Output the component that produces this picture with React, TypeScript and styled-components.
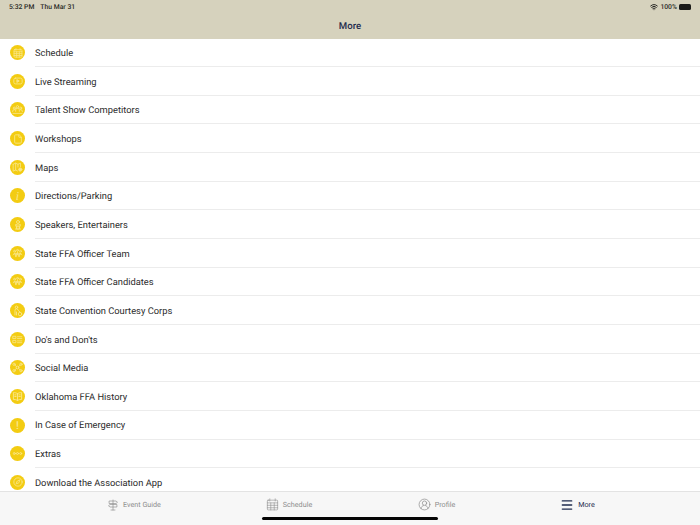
import React from 'react'
import styled, { createGlobalStyle } from 'styled-components'
import { Compass, File, Menu, Wifi } from 'lucide-react'

const GlobalStyle = createGlobalStyle`
  html, body {
    margin: 0;
    padding: 0;
    background: #fff;
    font-family: Roboto, "Liberation Sans", sans-serif;
    text-rendering: geometricPrecision;
  }
`

const Page = styled.div`
  position: relative;
  width: 700px;
  height: 525px;
  display: flex;
  flex-direction: column;
  overflow: hidden;
`

const Header = styled.header`
  height: 39px;
  flex: none;
  background: #d6d2bd;
  display: flex;
  flex-direction: column;
`

const StatusBar = styled.div`
  height: 13px;
  padding: 0 9px 0 9px;
  display: flex;
  align-items: center;
  justify-content: space-between;
  font-size: 6.8px;
  font-weight: 500;
  color: #2a2a26;
`

const StatusGroup = styled.div`
  display: flex;
  align-items: center;
  gap: 6px;
`

const StatusRight = styled(StatusGroup)`
  gap: 2px;
`

const Battery = styled.div`
  width: 12px;
  height: 6px;
  border-radius: 1.5px;
  background: #1c1c1a;
`

const Title = styled.div`
  flex: 1;
  display: flex;
  align-items: center;
  justify-content: center;
  padding-top: 1px;
  font-size: 9.6px;
  font-weight: 500;
  color: #1e2b4d;
`

const List = styled.div`
  flex: 1;
  overflow: hidden;
  margin-top: -0.7px;
`

const Row = styled.div`
  height: 28.67px;
  display: flex;
  align-items: center;
  padding-left: 10px;
  box-sizing: border-box;
`

const Badge = styled.div`
  width: 15px;
  height: 15px;
  flex: none;
  border-radius: 50%;
  background: #f3cc12;
  color: #f9e78c;
  display: flex;
  align-items: center;
  justify-content: center;
  margin-right: 10px;
`

const Label = styled.div<{ $last: boolean }>`
  flex: 1;
  height: 100%;
  display: flex;
  align-items: center;
  padding-top: 2.6px;
  font-size: 9.33px;
  color: #2b2b2b;
  box-sizing: border-box;
  border-bottom: ${p => (p.$last ? 'none' : '1px solid #ececec')};
`

const ItalicI = styled.span`
  font-family: "Liberation Serif", serif;
  font-style: italic;
  font-size: 12px;
  line-height: 1;
`

const Bang = styled.span`
  font-size: 11px;
  font-weight: 500;
  line-height: 1;
`

const TabBar = styled.nav`
  height: 34px;
  flex: none;
  background: #f7f7f7;
  border-top: 1px solid #e3e3e3;
  box-sizing: border-box;
  padding: 0 0 8px 0;
  display: grid;
  grid-template-columns: 60px 148px 162px 133px 149px;
`

const Tab = styled.div<{ $active?: boolean; $col: number }>`
  grid-column: ${p => p.$col} / span 1;
  display: flex;
  align-items: center;
  justify-content: center;
  gap: 4px;
  font-size: 7.2px;
  color: ${p => (p.$active ? '#1e2b4d' : '#8c8c8c')};
`

const HomeIndicator = styled.div`
  position: absolute;
  left: 262px;
  bottom: 5px;
  width: 176px;
  height: 3px;
  border-radius: 2px;
  background: #050505;
`

const Glyph = ({ size = 10, sw = 1.6, children }: { size?: number; sw?: number; children: React.ReactNode }) => (
  <svg width={size} height={size} viewBox="0 0 24 24" fill="none" stroke="currentColor" strokeWidth={sw} strokeLinecap="round" strokeLinejoin="round">
    {children}
  </svg>
)

const GridCalendar = ({ size = 10, sw = 1.8 }: { size?: number; sw?: number }) => (
  <Glyph size={size} sw={sw}>
    <rect x="2.5" y="4" width="19" height="18" rx="1.5" />
    <path d="M7 1.5v4M17 1.5v4M2.5 9h19M2.5 13.5h19M2.5 18h19M8.8 9v13M15.2 9v13" />
  </Glyph>
)

const People = ({ sw = 1.8 }: { sw?: number }) => (
  <Glyph size={11} sw={sw}>
    <circle cx="12" cy="6" r="2.6" />
    <circle cx="5" cy="9" r="2.2" />
    <circle cx="19" cy="9" r="2.2" />
    <path d="M8 16v-3a4 4 0 0 1 8 0v3M1.5 17v-1.5a3.5 3.5 0 0 1 4-3.2M22.5 17v-1.5a3.5 3.5 0 0 0-4-3.2M2 20.5h20" />
  </Glyph>
)

const Crowd = () => (
  <Glyph size={11} sw={1.7}>
    <circle cx="12" cy="5" r="2" />
    <circle cx="5.5" cy="7" r="2" />
    <circle cx="18.5" cy="7" r="2" />
    <circle cx="8.5" cy="13" r="2" />
    <circle cx="15.5" cy="13" r="2" />
    <path d="M2.5 15l3-4 3 8M21.5 15l-3-4-3 8M8.5 19l3.5-6 3.5 6M12 9v4" />
  </Glyph>
)

const items: [string, React.ReactNode][] = [
  ['Schedule', <GridCalendar />],
  ['Live Streaming', <Glyph sw={2}><rect x="2" y="5" width="20" height="14" rx="4" /><path d="M10 9l5 3-5 3z" fill="currentColor" /></Glyph>],
  ['Talent Show Competitors', <People />],
  ['Workshops', <File size={10} strokeWidth={2} />],
  ['Maps', <Glyph size={11} sw={1.8}><path d="M2.5 5l5.5-2.5 5 2.5 5.5-2.5v8M2.5 5v15l5.500-2.500 4 2M8 2.500v15M13 5v6" /><circle cx="18" cy="16.500" r="3.500" fill="currentColor" /></Glyph>],
  ['Directions/Parking', <ItalicI>i</ItalicI>],
  ['Speakers, Entertainers', <Glyph size={12} sw={1.7}><circle cx="12" cy="6" r="3" /><path d="M7 12h10M8.500 10.500c-1 2-1 3.500 0 5h7c1-1.500 1-3 0-5M9 15.500v4.500h6v-4.500M7 20h10" /></Glyph>],
  ['State FFA Officer Team', <Crowd />],
  ['State FFA Officer Candidates', <Crowd />],
  ['State Convention Courtesy Corps', <Glyph size={12} sw={1.8}><circle cx="9" cy="4.500" r="2.500" /><path d="M6 20V10.500a3 3 0 0 1 6 0l3.500 3" /><circle cx="16" cy="18" r="3.500" /><path d="M9 14v6" /></Glyph>],
  ["Do's and Don'ts", <Glyph size={11} sw={1.8}><rect x="2.500" y="5" width="6" height="5" /><rect x="2.500" y="14" width="6" height="5" /><path d="M12 6h9.500M12 10h9.500M12 15h9.500M12 19h9.500" /></Glyph>],
  ['Social Media', <Glyph size={11} sw={1.9}><circle cx="12" cy="12" r="3" /><circle cx="4.500" cy="5" r="2.500" /><circle cx="19.500" cy="5" r="2.500" /><circle cx="4.500" cy="19" r="2.500" /><circle cx="19.500" cy="19" r="2.500" /><path d="M6.500 7l3.300 3M17.500 7l-3.300 3M6.500 17l3.300-3M17.500 17l-3.300-3" /></Glyph>],
  ['Oklahoma FFA History', <Glyph size={11} sw={2}><path d="M12 6c-2-2-5-2.500-9-2.500v15c4 0 7 .5 9 2 2-1.500 5-2 9-2v-15c-4 0-7 .5-9 2.500zM12 6v15M6 8.500h3M6 12h3M15 8.500h3M15 12h3" /></Glyph>],
  ['In Case of Emergency', <Bang>!</Bang>],
  ['Extras', <Glyph size={11} sw={1.8}><circle cx="5" cy="12" r="2.200" /><circle cx="12" cy="12" r="2.200" /><circle cx="19" cy="12" r="2.200" /></Glyph>],
  ['Download the Association App', <Compass size={10} strokeWidth={2} />],
]

export default function App() {
  return (
    <Page>
      <GlobalStyle />
      <Header>
        <StatusBar>
          <StatusGroup>
            <span>5:32 PM</span>
            <span>Thu Mar 31</span>
          </StatusGroup>
          <StatusRight>
            <Wifi size={8} strokeWidth={3} />
            <span>100%</span>
            <Battery />
          </StatusRight>
        </StatusBar>
        <Title>More</Title>
      </Header>
      <List>
        {items.map(([name, icon], i) => (
          <Row key={name}>
            <Badge>{icon}</Badge>
            <Label $last={i === items.length - 1}>{name}</Label>
          </Row>
        ))}
      </List>
      <TabBar>
        <Tab $col={2}>
          <Glyph size={12} sw={1.3}><path d="M12 2v20M8 22h8M5 4h13l3 2.500-3 2.500H5zM19 11H6l-3 2.500L6 16h13z" /></Glyph>
          Event Guide
        </Tab>
        <Tab $col={3}><GridCalendar size={13} sw={1.1} />Schedule</Tab>
        <Tab $col={4}>
          <Glyph size={13} sw={1.3}><circle cx="12" cy="12" r="10" /><circle cx="12" cy="9.500" r="4" /><path d="M5.500 19.500c.5-3.500 2.500-5 4.500-5.500M18.500 19.500c-.5-3.500-2.500-5-4.500-5.500" /></Glyph>
          Profile
        </Tab>
        <Tab $col={5} $active><Menu size={14} strokeWidth={2.4} />More</Tab>
      </TabBar>
      <HomeIndicator />
    </Page>
  )
}
